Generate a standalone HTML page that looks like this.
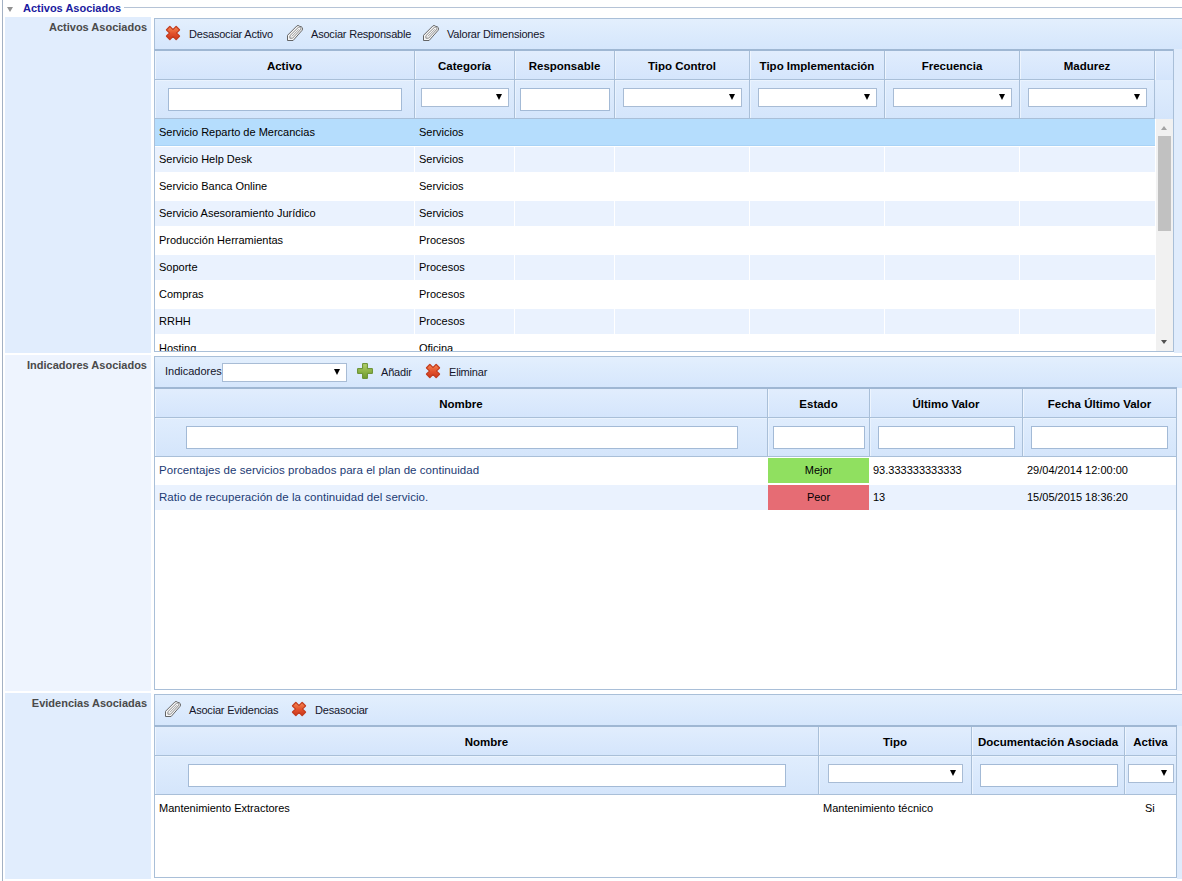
<!DOCTYPE html>
<html lang="es"><head><meta charset="utf-8"><title>Activos Asociados</title>
<style>
html,body{margin:0;padding:0;background:#fff;}
body{width:1182px;height:881px;position:relative;overflow:hidden;font-family:"Liberation Sans",Arial,sans-serif;font-size:11px;color:#000;}
.abs,.abs *{position:absolute;box-sizing:border-box;white-space:nowrap;}
.tah{font-family:"Liberation Sans",Tahoma,sans-serif;}
.lbl{background:#e1edfd;left:5px;width:146px;}
.lbl span{right:4px;top:4px;font-weight:bold;color:#4a4a4a;font-size:11px;line-height:13px;}
.tb{background:linear-gradient(#e3effd,#d5e6fc);border-top:1px solid #a9bfd8;border-left:1px solid #a9bfd8;}
.tb span{font-size:11px;line-height:13px;color:#15152a;top:9px;letter-spacing:-0.2px;}
.hd{background:linear-gradient(#e1edfd,#d4e5fc);border-top:2px solid #9fb7d3;border-left:1px solid #a9bfd8;}
.hc{top:0;height:29px;border-right:1px solid #a9bfd8;border-bottom:1px solid #a9bfd8;text-align:center;font-weight:bold;font-size:11.5px;line-height:30px;color:#000;box-shadow:inset 1px 0 0 #eef5fe;}
.fr{background:linear-gradient(#e0edfd,#d4e5fb);border-left:1px solid #a9bfd8;}
.fc{top:0;height:39px;border-right:1px solid #a9bfd8;border-bottom:1px solid #a9bfd8;box-shadow:inset 1px 1px 0 #eaf3fe;}
.in{background:#fff;border:1px solid #a3bad6;height:23px;top:8px;}
.sel{background:#fff;border:1px solid #a8bcd5;height:19px;top:8px;}
.sel:after{content:"";position:absolute;right:6px;top:5px;border:3.5px solid transparent;border-top:6px solid #000;border-bottom:0;}
.body{background:#fff;border-left:1px solid #a9bfd8;border-bottom:1px solid #a9bfd8;overflow:hidden;}
.row{left:0;height:27px;}
.row span{top:7px;font-size:11px;line-height:13px;}
.alt{background:linear-gradient(#fff 1px,#eaf2fe 1px,#eaf2fe 26px,#fff 26px);}
.selr{background:#b5ddfd;box-shadow:inset 0 -1px 0 #a9d3f6;}
.vs{top:0;width:1px;height:27px;background:#fff;}
</style></head><body>

<div class="abs" style="left:2px;top:0;width:1px;height:881px;background:#a3b1c4"></div>
<div class="abs" style="left:124px;top:7px;width:1058px;height:1px;background:#b5c3d6"></div>
<div class="abs" style="left:7px;top:7px;width:0;height:0;border:3.5px solid transparent;border-top:5px solid #929292;border-bottom:0"></div>
<div class="abs tah" style="left:23px;top:1px;font-weight:bold;font-size:11px;line-height:14px;color:#1a1aa0">Activos Asociados</div>
<div class="abs lbl" style="top:17px;height:336px;background:#e1edfd"><span>Activos Asociados</span></div>
<div class="abs tb tah" style="left:154px;top:18px;width:1028px;height:31px"><svg style="left:10px;top:6px" width="16" height="16" viewBox="0 0 16 16"><defs><linearGradient id="gx" x1="0" y1="0" x2="0" y2="1"><stop offset="0" stop-color="#f4814d"/><stop offset="0.55" stop-color="#e2502b"/><stop offset="1" stop-color="#cf3a1d"/></linearGradient><linearGradient id="gp" x1="0" y1="0" x2="0" y2="1"><stop offset="0" stop-color="#b6d171"/><stop offset="0.5" stop-color="#8fb548"/><stop offset="1" stop-color="#6f9b30"/></linearGradient></defs><path d="M11.15 1.60 L14.40 4.85 L11.25 8.00 L14.40 11.15 L11.15 14.40 L8.00 11.25 L4.85 14.40 L1.60 11.15 L4.75 8.00 L1.60 4.85 L4.85 1.60 L8.00 4.75 Z" fill="url(#gx)" stroke="#c23c1f" stroke-width="1.5" stroke-linejoin="round"/><path d="M11.11 2.20 L13.80 4.89 L10.69 8.00 L13.80 11.11 L11.11 13.80 L8.00 10.69 L4.89 13.80 L2.20 11.11 L5.31 8.00 L2.20 4.89 L4.89 2.20 L8.00 5.31 Z" fill="url(#gx)" stroke="none"/></svg><span style="left:34px">Desasociar Activo</span><svg style="left:132px;top:6px" width="16" height="16" viewBox="0 0 16 16"><path d="M0.5 15.5 L0.5 10.3 L9.9 0.9 Q11.3 -0.1 12.5 1 L12.9 1.6 Q14.2 1.2 15.1 2.4 Q16.1 4 15 5.4 L6.1 15.5 Z" fill="#f6f6f6" stroke="#555" stroke-width="0.9" stroke-linejoin="round"/><path d="M2.9 13.2 L2.9 10.7 L11.3 2.4 Q12.4 1.7 13.4 2.6 Q14.3 3.6 13.5 4.7 L5.6 13.2 Z" fill="none" stroke="#6e6e6e" stroke-width="0.8" stroke-linejoin="round"/><path d="M4.9 11.3 L12 4.2" fill="none" stroke="#8a8a8a" stroke-width="0.8"/></svg><span style="left:156px">Asociar Responsable</span><svg style="left:268px;top:6px" width="16" height="16" viewBox="0 0 16 16"><path d="M0.5 15.5 L0.5 10.3 L9.9 0.9 Q11.3 -0.1 12.5 1 L12.9 1.6 Q14.2 1.2 15.1 2.4 Q16.1 4 15 5.4 L6.1 15.5 Z" fill="#f6f6f6" stroke="#555" stroke-width="0.9" stroke-linejoin="round"/><path d="M2.9 13.2 L2.9 10.7 L11.3 2.4 Q12.4 1.7 13.4 2.6 Q14.3 3.6 13.5 4.7 L5.6 13.2 Z" fill="none" stroke="#6e6e6e" stroke-width="0.8" stroke-linejoin="round"/><path d="M4.9 11.3 L12 4.2" fill="none" stroke="#8a8a8a" stroke-width="0.8"/></svg><span style="left:292px">Valorar Dimensiones</span></div>
<div class="abs hd tah" style="left:154px;top:49px;width:1020px;height:31px">
<div class="hc" style="left:0px;width:260px">Activo</div>
<div class="hc" style="left:260px;width:100px">Categoría</div>
<div class="hc" style="left:360px;width:100px">Responsable</div>
<div class="hc" style="left:460px;width:135px">Tipo Control</div>
<div class="hc" style="left:595px;width:135px">Tipo Implementación</div>
<div class="hc" style="left:730px;width:135px">Frecuencia</div>
<div class="hc" style="left:865px;width:135px">Madurez</div>
<div class="hc" style="left:1000px;width:20px;height:70px"></div>
</div>
<div class="abs fr" style="left:154px;top:80px;width:1020px;height:39px">
<div class="fc" style="left:0px;width:260px"><div class="in" style="left:13px;width:234px"></div></div>
<div class="fc" style="left:260px;width:100px"><div class="sel" style="left:6px;width:88px"></div></div>
<div class="fc" style="left:360px;width:100px"><div class="in" style="left:5px;width:90px"></div></div>
<div class="fc" style="left:460px;width:135px"><div class="sel" style="left:8px;width:119px"></div></div>
<div class="fc" style="left:595px;width:135px"><div class="sel" style="left:8px;width:119px"></div></div>
<div class="fc" style="left:730px;width:135px"><div class="sel" style="left:8px;width:119px"></div></div>
<div class="fc" style="left:865px;width:135px"><div class="sel" style="left:8px;width:119px"></div></div>
</div>
<div class="abs body" style="left:154px;top:119px;width:1020px;height:233px">
<div class="row selr" style="top:0px;width:1000px"><span style="left:4px">Servicio Reparto de Mercancias</span><span style="left:264px">Servicios</span>
</div>
<div class="row alt" style="top:27px;width:1000px"><span style="left:4px">Servicio Help Desk</span><span style="left:264px">Servicios</span>
<div class="vs" style="left:259px"></div>
<div class="vs" style="left:359px"></div>
<div class="vs" style="left:459px"></div>
<div class="vs" style="left:594px"></div>
<div class="vs" style="left:729px"></div>
<div class="vs" style="left:864px"></div>
</div>
<div class="row " style="top:54px;width:1000px"><span style="left:4px">Servicio Banca Online</span><span style="left:264px">Servicios</span>
</div>
<div class="row alt" style="top:81px;width:1000px"><span style="left:4px">Servicio Asesoramiento Jurídico</span><span style="left:264px">Servicios</span>
<div class="vs" style="left:259px"></div>
<div class="vs" style="left:359px"></div>
<div class="vs" style="left:459px"></div>
<div class="vs" style="left:594px"></div>
<div class="vs" style="left:729px"></div>
<div class="vs" style="left:864px"></div>
</div>
<div class="row " style="top:108px;width:1000px"><span style="left:4px">Producción Herramientas</span><span style="left:264px">Procesos</span>
</div>
<div class="row alt" style="top:135px;width:1000px"><span style="left:4px">Soporte</span><span style="left:264px">Procesos</span>
<div class="vs" style="left:259px"></div>
<div class="vs" style="left:359px"></div>
<div class="vs" style="left:459px"></div>
<div class="vs" style="left:594px"></div>
<div class="vs" style="left:729px"></div>
<div class="vs" style="left:864px"></div>
</div>
<div class="row " style="top:162px;width:1000px"><span style="left:4px">Compras</span><span style="left:264px">Procesos</span>
</div>
<div class="row alt" style="top:189px;width:1000px"><span style="left:4px">RRHH</span><span style="left:264px">Procesos</span>
<div class="vs" style="left:259px"></div>
<div class="vs" style="left:359px"></div>
<div class="vs" style="left:459px"></div>
<div class="vs" style="left:594px"></div>
<div class="vs" style="left:729px"></div>
<div class="vs" style="left:864px"></div>
</div>
<div class="row " style="top:216px;width:1000px"><span style="left:4px">Hosting</span><span style="left:264px">Oficina</span>
</div>
<div style="left:1001px;top:0;width:17px;height:232px;background:#f1f1f1"></div>
<div style="left:1003px;top:17px;width:13px;height:95px;background:#c1c1c1"></div>
<div style="left:1006px;top:7px;width:0;height:0;border:3.5px solid transparent;border-bottom:4px solid #a3a3a3;border-top:0"></div>
<div style="left:1006px;top:221px;width:0;height:0;border:3.5px solid transparent;border-top:4px solid #505050;border-bottom:0"></div>
</div>
<div class="abs" style="left:1173px;top:49px;width:1px;height:303px;background:#a9bfd8"></div>
<div class="abs" style="left:1174px;top:49px;width:8px;height:304px;background:#e0ecfc"></div>
<div class="abs lbl" style="top:355px;height:336px;background:#eef4fe"><span>Indicadores Asociados</span></div>
<div class="abs tb tah" style="left:154px;top:356px;width:1028px;height:32px"><span style="left:10px;top:8px;letter-spacing:0">Indicadores</span><div class="sel" style="left:67px;top:6px;width:125px;height:19px"></div><svg style="left:202px;top:6px" width="16" height="16" viewBox="0 0 16 16"><path d="M5.6 0.6 h4.8 v5 h5 v4.8 h-5 v5 h-4.8 v-5 h-5 v-4.8 h5 Z" fill="url(#gp)" stroke="#668f2e" stroke-width="1" stroke-linejoin="round"/></svg><span style="left:226px">Añadir</span><svg style="left:270px;top:6px" width="16" height="16" viewBox="0 0 16 16"><path d="M11.15 1.60 L14.40 4.85 L11.25 8.00 L14.40 11.15 L11.15 14.40 L8.00 11.25 L4.85 14.40 L1.60 11.15 L4.75 8.00 L1.60 4.85 L4.85 1.60 L8.00 4.75 Z" fill="url(#gx)" stroke="#c23c1f" stroke-width="1.5" stroke-linejoin="round"/><path d="M11.11 2.20 L13.80 4.89 L10.69 8.00 L13.80 11.11 L11.11 13.80 L8.00 10.69 L4.89 13.80 L2.20 11.11 L5.31 8.00 L2.20 4.89 L4.89 2.20 L8.00 5.31 Z" fill="url(#gx)" stroke="none"/></svg><span style="left:294px">Eliminar</span></div>
<div class="abs hd tah" style="left:154px;top:387px;width:1023px;height:31px">
<div class="hc" style="left:0px;width:613px">Nombre</div>
<div class="hc" style="left:613px;width:102px">Estado</div>
<div class="hc" style="left:715px;width:153px">Último Valor</div>
<div class="hc" style="left:868px;width:154px">Fecha Último Valor</div>
</div>
<div class="abs fr" style="left:154px;top:418px;width:1023px;height:39px">
<div class="fc" style="left:0px;width:613px"><div class="in" style="left:31px;width:552px"></div></div>
<div class="fc" style="left:613px;width:102px"><div class="in" style="left:5px;width:92px"></div></div>
<div class="fc" style="left:715px;width:153px"><div class="in" style="left:8px;width:137px"></div></div>
<div class="fc" style="left:868px;width:154px"><div class="in" style="left:8px;width:137px"></div></div>
</div>
<div class="abs body" style="left:154px;top:457px;width:1023px;height:233px;border-right:1px solid #a9bfd8">
<div class="row " style="top:0px;width:1021px;height:27px"><span class="tah" style="left:4px;color:#1b3a74;font-size:11.5px;letter-spacing:0.05px">Porcentajes de servicios probados para el plan de continuidad</span><div style="left:613px;top:1px;width:101px;height:25px;background:#90e060;text-align:center;line-height:25px;font-size:11px">Mejor</div><span style="left:718px">93.333333333333</span><span style="left:872px">29/04/2014 12:00:00</span></div>
<div class="row alt" style="top:27px;width:1021px;height:27px"><span class="tah" style="left:4px;color:#1b3a74;font-size:11.5px;letter-spacing:0.05px">Ratio de recuperación de la continuidad del servicio.</span><div style="left:613px;top:1px;width:101px;height:25px;background:#e66c74;text-align:center;line-height:25px;font-size:11px">Peor</div><span style="left:718px">13</span><span style="left:872px">15/05/2015 18:36:20</span></div>
</div>
<div class="abs" style="left:1177px;top:388px;width:5px;height:303px;background:#eef4fe"></div>
<div class="abs lbl" style="top:693px;height:186px;background:#e1edfd"><span>Evidencias Asociadas</span></div>
<div class="abs tb tah" style="left:154px;top:694px;width:1028px;height:32px"><svg style="left:10px;top:6px" width="16" height="16" viewBox="0 0 16 16"><path d="M0.5 15.5 L0.5 10.3 L9.9 0.9 Q11.3 -0.1 12.5 1 L12.9 1.6 Q14.2 1.2 15.1 2.4 Q16.1 4 15 5.4 L6.1 15.5 Z" fill="#f6f6f6" stroke="#555" stroke-width="0.9" stroke-linejoin="round"/><path d="M2.9 13.2 L2.9 10.7 L11.3 2.4 Q12.4 1.7 13.4 2.6 Q14.3 3.6 13.5 4.7 L5.6 13.2 Z" fill="none" stroke="#6e6e6e" stroke-width="0.8" stroke-linejoin="round"/><path d="M4.9 11.3 L12 4.2" fill="none" stroke="#8a8a8a" stroke-width="0.8"/></svg><span style="left:34px">Asociar Evidencias</span><svg style="left:136px;top:6px" width="16" height="16" viewBox="0 0 16 16"><path d="M11.15 1.60 L14.40 4.85 L11.25 8.00 L14.40 11.15 L11.15 14.40 L8.00 11.25 L4.85 14.40 L1.60 11.15 L4.75 8.00 L1.60 4.85 L4.85 1.60 L8.00 4.75 Z" fill="url(#gx)" stroke="#c23c1f" stroke-width="1.5" stroke-linejoin="round"/><path d="M11.11 2.20 L13.80 4.89 L10.69 8.00 L13.80 11.11 L11.11 13.80 L8.00 10.69 L4.89 13.80 L2.20 11.11 L5.31 8.00 L2.20 4.89 L4.89 2.20 L8.00 5.31 Z" fill="url(#gx)" stroke="none"/></svg><span style="left:160px">Desasociar</span></div>
<div class="abs hd tah" style="left:154px;top:725px;width:1023px;height:31px">
<div class="hc" style="left:0px;width:664px">Nombre</div>
<div class="hc" style="left:664px;width:153px">Tipo</div>
<div class="hc" style="left:817px;width:153px">Documentación Asociada</div>
<div class="hc" style="left:970px;width:52px">Activa</div>
</div>
<div class="abs fr" style="left:154px;top:756px;width:1023px;height:39px">
<div class="fc" style="left:0px;width:664px"><div class="in" style="left:33px;width:598px"></div></div>
<div class="fc" style="left:664px;width:153px"><div class="sel" style="left:9px;width:135px"></div></div>
<div class="fc" style="left:817px;width:153px"><div class="in" style="left:8px;width:138px"></div></div>
<div class="fc" style="left:970px;width:52px"><div class="sel" style="left:3px;width:46px"></div></div>
</div>
<div class="abs body" style="left:154px;top:795px;width:1023px;height:83px;border-right:1px solid #a9bfd8">
<div class="row" style="top:0;width:1021px"><span style="left:4px">Mantenimiento Extractores</span><span style="left:668px">Mantenimiento técnico</span><span style="left:990px">Si</span></div>
</div>
<div class="abs" style="left:1177px;top:726px;width:5px;height:153px;background:#e0ecfc"></div>
</body></html>
